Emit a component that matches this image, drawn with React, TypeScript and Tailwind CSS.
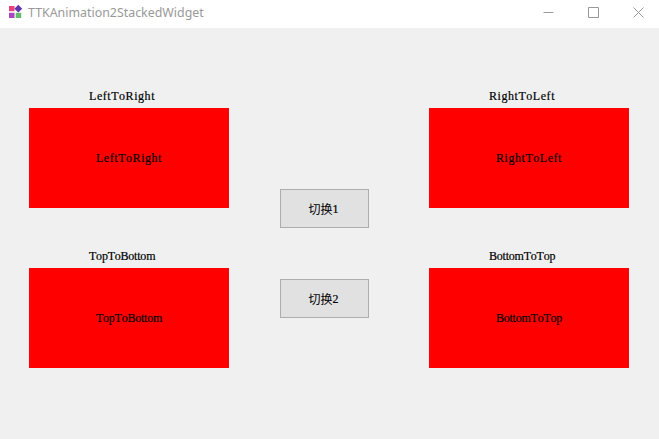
type PanelProps = { title: string; tracking: string };

const labelText =
  "whitespace-nowrap font-['Liberation_Serif',serif] text-xs leading-3 text-black [font-kerning:none] [-webkit-text-stroke:0.2px_black]";

function Panel({ title, tracking }: PanelProps) {
  return (
    <section className="flex h-[120px] w-[200px] flex-col">
      <div className="flex h-5 items-start pl-[60px] pt-0.5">
        <span className={`${labelText} ${tracking}`}>{title}</span>
      </div>
      <div className="flex h-[100px] items-center justify-center bg-[#ff0000]">
        <span className={`${labelText} ${tracking}`}>{title}</span>
      </div>
    </section>
  );
}

function SwitchButton({ digit }: { digit: string }) {
  return (
    <button className="flex h-[39px] w-[89px] items-center justify-center border border-[#adadad] bg-[#e1e1e1] pr-0.5 text-black">
      <span className="font-['Noto_Sans_CJK_SC',sans-serif] text-xs leading-4">切换</span>
      <span className={`${labelText} pt-px`}>{digit}</span>
    </button>
  );
}

function TitleBar() {
  return (
    <header className="flex h-7 items-start bg-white">
      <svg className="ml-2 mt-1 shrink-0" width="15" height="16" viewBox="0 0 15 16">
        <rect x="1" y="2" width="5.5" height="5.2" fill="#ec407a" />
        <rect x="1" y="8.8" width="5.5" height="5.2" fill="#ab47bc" />
        <rect x="7.7" y="8.8" width="5.5" height="5.2" fill="#66bb6a" />
        <path d="M10.3 0.8 14.2 4.7 10.3 8.6 6.4 4.7Z" fill="#5e35b1" />
      </svg>
      <h1 className="ml-[5px] mt-1 grow whitespace-nowrap font-['Noto_Sans',sans-serif] text-[12.4px] leading-[18px] text-[#999999]">
        TTKAnimation2StackedWidget
      </h1>
      <div className="mr-[15px] flex gap-[34px] pt-[7px]">
        <svg width="11" height="11" viewBox="0 0 11 11" stroke="#999999" fill="none">
          <path d="M0.5 5.5H10.5" />
        </svg>
        <svg width="11" height="11" viewBox="0 0 11 11" stroke="#999999" fill="none">
          <path d="M1 .5H10.5V10.5H.5V.5H1" />
        </svg>
        <svg width="11" height="11" viewBox="0 0 11 11" stroke="#999999" fill="none">
          <path d="M.5 .5 10.5 10.5M10.5 .5 .5 10.5" />
        </svg>
      </div>
    </header>
  );
}

export default function App() {
  return (
    <div className="h-[439px] w-[659px] overflow-hidden bg-[#f0f0f0]">
      <TitleBar />
      <main className="flex pl-[29px] pt-[60px]">
        <div className="flex flex-col gap-10">
          <Panel title="LeftToRight" tracking="tracking-[0.55px]" />
          <Panel title="TopToBottom" tracking="tracking-[-0.22px]" />
        </div>
        <div className="ml-[51px] mt-[101px] flex flex-col gap-[51px]">
          <SwitchButton digit="1" />
          <SwitchButton digit="2" />
        </div>
        <div className="ml-[60px] flex flex-col gap-10">
          <Panel title="RightToLeft" tracking="tracking-[0.55px]" />
          <Panel title="BottomToTop" tracking="tracking-[-0.22px]" />
        </div>
      </main>
    </div>
  );
}
